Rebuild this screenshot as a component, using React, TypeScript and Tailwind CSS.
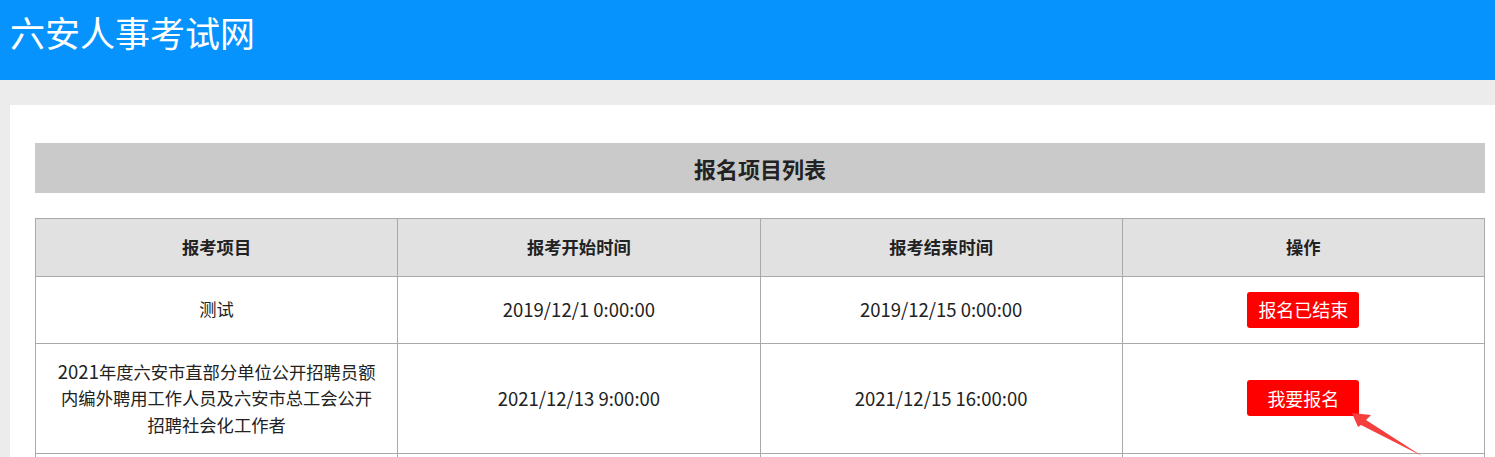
import React from "react";

const font = { fontFamily: '"Noto Sans CJK SC", "Noto Sans", sans-serif' };

export default function App() {
  const cell = "border border-[#a9a9a9] text-center align-middle px-[15px] py-[15px] leading-[26.5px]";
  const date = cell + " text-[18.5px]";
  return (
    <div className="min-h-[457px] bg-[#ececec] overflow-hidden" style={font}>
      <header className="h-[80px] bg-[#0693fe] flex items-start pl-[10px] pt-[8px]">
        <h1 className="text-white text-[35px] leading-[48px] font-normal">六安人事考试网</h1>
      </header>
      <div className="ml-[10px] mt-[25px] bg-white pl-[25px] pt-[38px] pb-[40px] min-h-[400px]">
        <div className="w-[1450px] h-[50px] bg-[#cacaca] flex items-center justify-center">
          <span className="text-[22px] font-bold text-[#222]">报名项目列表</span>
        </div>
        <div className="relative mt-[25px] w-[1450px]">
          <table className="w-[1450px] border-collapse table-fixed text-[17.3px] text-[#222]">
            <thead>
              <tr className="bg-[#e1e1e1]">
                <th className={cell + " font-bold"}>报考项目</th>
                <th className={cell + " font-bold"}>报考开始时间</th>
                <th className={cell + " font-bold"}>报考结束时间</th>
                <th className={cell + " font-bold"}>操作</th>
              </tr>
            </thead>
            <tbody>
              <tr>
                <td className={cell}>测试</td>
                <td className={date}>2019/12/1 0:00:00</td>
                <td className={date}>2019/12/15 0:00:00</td>
                <td className={cell}>
                  <button className="mx-auto flex items-center justify-center w-[112px] h-[36px] rounded-[3px] bg-[#ff0000] text-white text-[18px]">
                    报名已结束
                  </button>
                </td>
              </tr>
              <tr>
                <td className={cell}>
                  <span className="text-[18.5px] leading-none">2021</span>年度六安市直部分单位公开招聘员额
                  <br />
                  内编外聘用工作人员及六安市总工会公开
                  <br />
                  招聘社会化工作者
                </td>
                <td className={date}>2021/12/13 9:00:00</td>
                <td className={date}>2021/12/15 16:00:00</td>
                <td className={cell}>
                  <button className="mx-auto flex items-center justify-center w-[112px] h-[36px] rounded-[3px] bg-[#ff0000] text-white text-[18px]">
                    我要报名
                  </button>
                </td>
              </tr>
              <tr>
                <td className={cell}>&nbsp;</td>
                <td className={cell}>&nbsp;</td>
                <td className={cell}>&nbsp;</td>
                <td className={cell}>&nbsp;</td>
              </tr>
            </tbody>
          </table>
          <svg
            className="absolute left-[1315px] top-[192px] pointer-events-none"
            width="80"
            height="50"
            viewBox="0 0 80 50"
          >
            <polygon points="2,3 21,5 16,10 72,46 11,15 8,17" fill="#f43f3f" />
          </svg>
        </div>
      </div>
    </div>
  );
}
